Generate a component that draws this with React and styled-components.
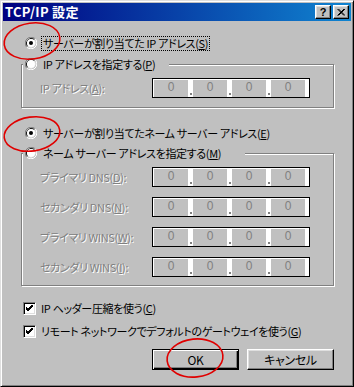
import React from "react";
import styled, { createGlobalStyle } from "styled-components";

const GlobalStyle = createGlobalStyle`
    html, body {
        margin: 0;
        padding: 0;
        background: #c0c0c0;
    }
    body {
        font-family: "Noto Sans CJK JP", "Liberation Sans", sans-serif;
        font-size: 11px;
        letter-spacing: -0.35px;
        font-feature-settings: "palt";
    }
`;

const Window = styled.div`
    position: relative;
    width: 354px;
    height: 387px;
    box-sizing: border-box;
    background: #c0c0c0;
    border: 1px solid;
    border-color: #dfdfdf #000 #000 #dfdfdf;
    box-shadow: inset 1px 1px 0 #fff, inset -1px -1px 0 #808080;
    padding: 2px;
    display: flex;
    flex-direction: column;
`;

const TitleBar = styled.div`
    height: 18px;
    display: flex;
    align-items: center;
    padding: 0 2px;
    background: linear-gradient(to right, #000080, #1084d0);
    color: #fff;
`;

const TitleText = styled.div`
    flex: 1;
    font-weight: bold;
    font-size: 13px;
    line-height: 18px;
    letter-spacing: 0.3px;
`;

const TitleButton = styled.div`
    width: 16px;
    height: 14px;
    box-sizing: border-box;
    margin-left: ${(p) => (p.gap ? "2px" : "0")};
    background: #c0c0c0;
    border: 1px solid;
    border-color: #fff #000 #000 #fff;
    box-shadow: inset -1px -1px 0 #808080, inset 1px 1px 0 #dfdfdf;
    display: flex;
    align-items: center;
    justify-content: center;
    color: #000;
    font-family: "Liberation Sans", sans-serif;
    font-weight: bold;
    font-size: 11px;
    letter-spacing: 0;
    line-height: 12px;
`;

const Body = styled.div`
    flex: 1;
    display: flex;
    flex-direction: column;
    padding: 0 17px 0 18px;
`;

const Row = styled.div`
    display: flex;
    align-items: center;
    height: 16px;
    margin-top: ${(p) => p.top || 0}px;
    padding-left: ${(p) => p.indent || 0}px;
    gap: ${(p) => p.gap || 4}px;
    svg {
        flex-shrink: 0;
    }
`;

const Label = styled.span`
    white-space: nowrap;
    line-height: 13px;
    padding: 0 1px;
    border: 1px dotted ${(p) => (p.focus ? "#000" : "transparent")};
    color: ${(p) => (p.disabled ? "#808080" : "#000")};
    text-shadow: ${(p) => (p.disabled ? "1px 1px 0 #fff" : "none")};
    u {
        text-decoration: underline;
        text-underline-offset: 1px;
    }
`;

const Group = styled.div`
    position: relative;
    margin-top: ${(p) => p.top}px;
    border: 1px solid #808080;
    box-shadow: 1px 1px 0 #fff, inset 1px 1px 0 #fff;
    padding: 13px 0 ${(p) => p.bottom}px 18px;
    display: flex;
    flex-direction: column;
    gap: 10px;
`;

const Legend = styled.div`
    position: absolute;
    top: -9px;
    left: 1px;
    width: ${(p) => p.width}px;
    padding-left: 2px;
    background: #c0c0c0;
    display: flex;
    align-items: center;
    height: 16px;
    gap: 4px;
    svg {
        flex-shrink: 0;
    }
`;

const FieldRow = styled.div`
    display: flex;
    align-items: center;
    height: 20px;
`;

const FieldLabel = styled.div`
    width: 112px;
    white-space: nowrap;
    color: #808080;
    text-shadow: 1px 1px 0 #fff;
    u {
        text-decoration: underline;
    }
`;

const IpBox = styled.div`
    width: 158px;
    height: 20px;
    box-sizing: border-box;
    border: 1px solid #000;
    background: #fff;
    padding: 1px 4px 0 1px;
    display: flex;
`;

const IpCell = styled.div`
    width: 34px;
    height: 17px;
    background: #c0c0c0;
    color: #808080;
    font-family: "Liberation Sans", sans-serif;
    font-size: 12px;
    letter-spacing: 0;
    line-height: 14px;
    text-align: center;
`;

const IpGap = styled.div`
    width: 5px;
    display: flex;
    align-items: flex-end;
    justify-content: center;
    padding-bottom: 2px;
    box-sizing: border-box;
`;

const Dot = styled.div`
    width: 2px;
    height: 2px;
    background: #808080;
`;

const CheckBox = styled.div`
    width: 13px;
    height: 13px;
    flex-shrink: 0;
    box-sizing: border-box;
    background: #fff;
    border: 1px solid;
    border-color: #808080 #fff #fff #808080;
    box-shadow: inset 1px 1px 0 #000, inset -1px -1px 0 #dfdfdf;
    display: flex;
    align-items: center;
    justify-content: center;
`;

const ButtonRow = styled.div`
    display: flex;
    justify-content: flex-end;
    gap: 8px;
    margin-top: 10px;
`;

const Button = styled.div`
    width: 87px;
    height: 21px;
    box-sizing: border-box;
    background: #c0c0c0;
    border: 1px solid;
    border-color: ${(p) => (p.primary ? "#000" : "#fff #000 #000 #fff")};
    box-shadow: ${(p) =>
        p.primary
            ? "inset 1px 1px 0 #fff, inset -1px -1px 0 #000, inset -2px -2px 0 #808080"
            : "inset -1px -1px 0 #808080, inset 1px 1px 0 #dfdfdf"};
    display: flex;
    align-items: center;
    justify-content: center;
    color: #000;
    font-size: 12px;
`;

const Annotations = styled.svg`
    position: absolute;
    left: 0;
    top: 0;
    pointer-events: none;
`;

const Radio = ({ checked }) => (
    <svg width="12" height="12" viewBox="0 0 12 12">
        <path d="M10.24 1.76 A6 6 0 0 0 1.76 10.24" stroke="#808080" strokeWidth="1" fill="none" />
        <path d="M1.76 10.24 A6 6 0 0 0 10.24 1.76" stroke="#fff" strokeWidth="1" fill="none" />
        <path d="M9.5 2.5 A5 5 0 0 0 2.5 9.5" stroke="#000" strokeWidth="1" fill="none" />
        <path d="M2.5 9.5 A5 5 0 0 0 9.5 2.5" stroke="#dfdfdf" strokeWidth="1" fill="none" />
        <circle cx="6" cy="6" r="4" fill="#fff" />
        {checked && <circle cx="6" cy="6" r="2" fill="#000" />}
    </svg>
);

const Check = () => (
    <CheckBox>
        <svg width="7" height="7" viewBox="0 0 7 7">
            <path d="M0 2 L2 4 L7 -1 M0 3 L2 5 L7 0 M0 4 L2 6 L7 1" stroke="#000" strokeWidth="1" fill="none" />
        </svg>
    </CheckBox>
);

const IpField = () => (
    <IpBox>
        {[0, 1, 2, 3].map((i) => (
            <React.Fragment key={i}>
                {i > 0 && (
                    <IpGap>
                        <Dot />
                    </IpGap>
                )}
                <IpCell>0</IpCell>
            </React.Fragment>
        ))}
    </IpBox>
);

const servers = [
    ["プライマリ DNS(", "D", "):"],
    ["セカンダリ DNS(", "N", "):"],
    ["プライマリ WINS(", "W", "):"],
    ["セカンダリ WINS(", "I", "):"],
];

export default function App() {
    return (
        <>
            <GlobalStyle />
            <Window>
                <TitleBar>
                    <TitleText>TCP/IP 設定</TitleText>
                    <TitleButton>?</TitleButton>
                    <TitleButton gap>
                        <svg width="8" height="7" viewBox="0 0 8 7">
                            <path d="M0.5 0 L7 6.5 M1.5 0 L8 6.5 M7 0 L0.5 6.5 M8 0 L1.5 6.5" stroke="#000" strokeWidth="1" />
                        </svg>
                    </TitleButton>
                </TitleBar>
                <Body>
                    <Row top={14} indent={4}>
                        <Radio checked />
                        <Label focus>
                            サーバーが割り当てた IP アドレス(<u>S</u>)
                        </Label>
                    </Row>
                    <Group top={13} bottom={9}>
                        <Legend width={144}>
                            <Radio />
                            <Label>
                                IP アドレスを指定する(<u>P</u>)
                            </Label>
                        </Legend>
                        <FieldRow>
                            <FieldLabel>
                                IP アドレス(<u>A</u>):
                            </FieldLabel>
                            <IpField />
                        </FieldRow>
                    </Group>
                    <Row top={17} indent={4}>
                        <Radio checked />
                        <Label>
                            サーバーが割り当てたネーム サーバー アドレス(<u>E</u>)
                        </Label>
                    </Row>
                    <Group top={12} bottom={8}>
                        <Legend width={220}>
                            <Radio />
                            <Label>
                                ネーム サーバー アドレスを指定する(<u>M</u>)
                            </Label>
                        </Legend>
                        {servers.map(([a, k, b]) => (
                            <FieldRow key={a}>
                                <FieldLabel>
                                    {a}
                                    <u>{k}</u>
                                    {b}
                                </FieldLabel>
                                <IpField />
                            </FieldRow>
                        ))}
                    </Group>
                    <Row top={14} indent={2} gap={3}>
                        <Check />
                        <Label>
                            IP ヘッダー圧縮を使う(<u>C</u>)
                        </Label>
                    </Row>
                    <Row top={7} indent={2} gap={3}>
                        <Check />
                        <Label>
                            リモート ネットワークでデフォルトのゲートウェイを使う(<u>G</u>)
                        </Label>
                    </Row>
                    <ButtonRow>
                        <Button primary>OK</Button>
                        <Button>キャンセル</Button>
                    </ButtonRow>
                </Body>
                <Annotations width="354" height="387" viewBox="0 0 354 387">
                    <ellipse cx="31" cy="40" rx="28" ry="18" transform="rotate(-8 31 40)" stroke="#e00000" strokeWidth="1.6" fill="none" />
                    <ellipse cx="31" cy="133" rx="28" ry="17" transform="rotate(-8 31 133)" stroke="#e00000" strokeWidth="1.6" fill="none" />
                    <ellipse cx="194" cy="357" rx="28" ry="19" transform="rotate(-6 194 357)" stroke="#e00000" strokeWidth="1.6" fill="none" />
                </Annotations>
            </Window>
        </>
    );
}
